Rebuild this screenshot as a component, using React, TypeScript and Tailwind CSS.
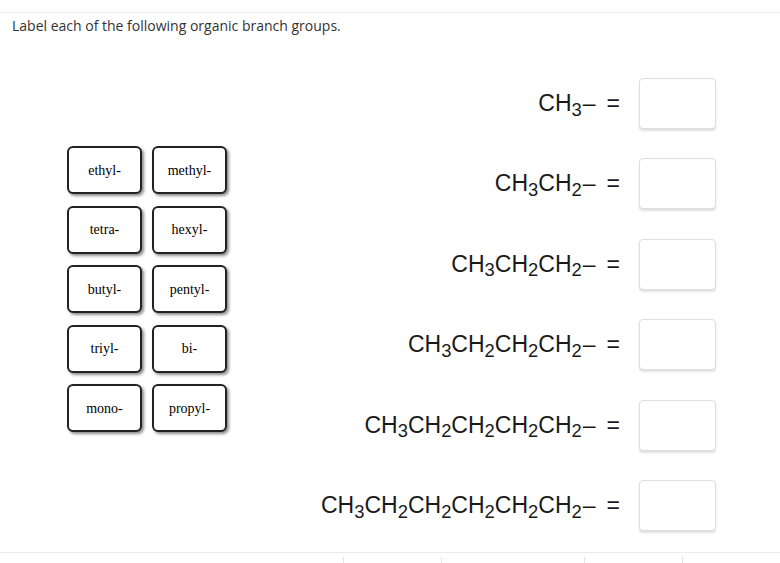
import React from 'react';

const tiles = ['ethyl-', 'methyl-', 'tetra-', 'hexyl-', 'butyl-', 'pentyl-', 'triyl-', 'bi-', 'mono-', 'propyl-'];

// number of CH2 groups after the first CH3
const chains = [0, 1, 2, 3, 4, 5];

function Formula({ n }: { n: number }) {
  return (
    <span className="font-['Liberation_Sans',Arial,sans-serif] text-[23px] leading-none text-[#1a1a1a] whitespace-nowrap">
      CH<sub className="text-[0.8em]">3</sub>
      {Array.from({ length: n }).map((_, i) => (
        <React.Fragment key={i}>
          CH<sub className="text-[0.8em]">2</sub>
        </React.Fragment>
      ))}
      <span className="ml-[1px]">–</span>
    </span>
  );
}

function Tile({ label }: { label: string }) {
  return (
    <div className="w-[75px] h-[48px] flex items-center justify-center bg-white border-2 border-[#222] rounded-[6px] shadow-[2px_2px_3px_rgba(0,0,0,0.45)]">
      <span className="font-['Liberation_Serif','Times_New_Roman',serif] text-[14px] text-black">{label}</span>
    </div>
  );
}

export default function App() {
  return (
    <div className="w-[780px] h-[563px] bg-white flex flex-col overflow-hidden">
      <div className="h-[13px] shrink-0 border-b border-[#ececec]" />

      <p className="mt-[4px] pl-[12px] font-['Open_Sans',sans-serif] text-[14px] leading-[18px] text-[#333]">
        Label each of the following organic branch groups.
      </p>

      <div className="flex-1 flex">
        {/* Draggable labels */}
        <div className="ml-[67px] mt-[111px] self-start grid grid-cols-[75px_75px] gap-x-[10px] gap-y-[11.5px]">
          {tiles.map((t) => (
            <Tile key={t} label={t} />
          ))}
        </div>

        {/* Drop targets */}
        <div className="ml-auto mr-[64px] mt-[43px] flex flex-col gap-[29.4px]">
          {chains.map((n) => (
            <div key={n} className="flex items-center justify-end h-[51px]">
              <Formula n={n} />
              <span className="ml-[11px] font-['Liberation_Sans',Arial,sans-serif] text-[23px] leading-none text-[#1a1a1a]">=</span>
              <div className="ml-[19px] w-[77px] h-[51px] bg-white border border-[#dedede] rounded-[4px] shadow-[0_2px_2px_rgba(0,0,0,0.12)]" />
            </div>
          ))}
        </div>
      </div>

      <div className="h-[11px] shrink-0 border-t border-[#ececec] flex items-end">
        <div className="ml-[343px] w-px h-[6px] bg-[#e4e4e4]" />
        <div className="ml-[97px] w-px h-[6px] bg-[#e4e4e4]" />
        <div className="ml-[142px] w-px h-[6px] bg-[#e4e4e4]" />
        <div className="ml-[97px] w-px h-[6px] bg-[#e4e4e4]" />
      </div>
    </div>
  );
}
